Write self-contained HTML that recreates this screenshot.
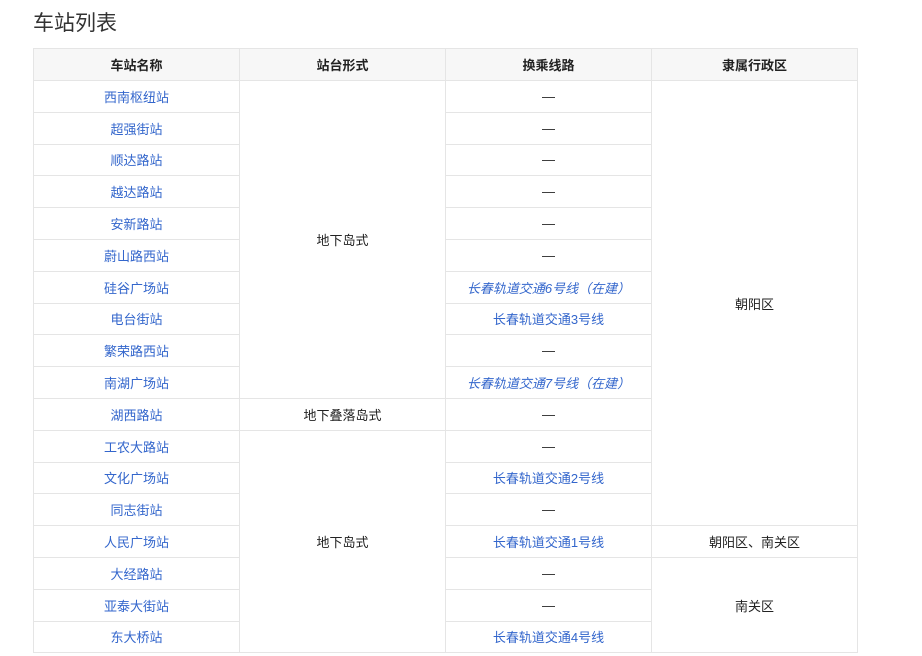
<!DOCTYPE html>
<html><head><meta charset="utf-8"><style>
body{margin:0;background:#fff;font-family:"Liberation Sans","Noto Sans CJK SC",sans-serif;color:#222;}
h2{position:absolute;left:33px;top:9px;margin:0;font-size:21px;font-weight:normal;color:#333;line-height:30px}
table{position:absolute;left:33px;top:48px;width:825px;border-collapse:collapse;font-size:13px;table-layout:fixed}
td,th{border:1px solid #e5e5e5;text-align:center;padding:0;height:30.8px}
th{background:#f7f7f7;font-weight:bold;height:31px;color:#222}
a{color:#3366cc;text-decoration:none}
i a{font-style:italic}
</style></head><body>
<h2>车站列表</h2>
<table>
<tr><th>车站名称</th><th>站台形式</th><th>换乘线路</th><th>隶属行政区</th></tr>
<tr><td><a>西南枢纽站</a></td><td rowspan="10">地下岛式</td><td>—</td><td rowspan="14">朝阳区</td></tr>
<tr><td><a>超强街站</a></td><td>—</td></tr>
<tr><td><a>顺达路站</a></td><td>—</td></tr>
<tr><td><a>越达路站</a></td><td>—</td></tr>
<tr><td><a>安新路站</a></td><td>—</td></tr>
<tr><td><a>蔚山路西站</a></td><td>—</td></tr>
<tr><td><a>硅谷广场站</a></td><td><i><a>长春轨道交通6号线（在建）</a></i></td></tr>
<tr><td><a>电台街站</a></td><td><a>长春轨道交通3号线</a></td></tr>
<tr><td><a>繁荣路西站</a></td><td>—</td></tr>
<tr><td><a>南湖广场站</a></td><td><i><a>长春轨道交通7号线（在建）</a></i></td></tr>
<tr><td><a>湖西路站</a></td><td>地下叠落岛式</td><td>—</td></tr>
<tr><td><a>工农大路站</a></td><td rowspan="7">地下岛式</td><td>—</td></tr>
<tr><td><a>文化广场站</a></td><td><a>长春轨道交通2号线</a></td></tr>
<tr><td><a>同志街站</a></td><td>—</td></tr>
<tr><td><a>人民广场站</a></td><td><a>长春轨道交通1号线</a></td><td>朝阳区、南关区</td></tr>
<tr><td><a>大经路站</a></td><td>—</td><td rowspan="3">南关区</td></tr>
<tr><td><a>亚泰大街站</a></td><td>—</td></tr>
<tr><td><a>东大桥站</a></td><td><a>长春轨道交通4号线</a></td></tr>
</table>
</body></html>
